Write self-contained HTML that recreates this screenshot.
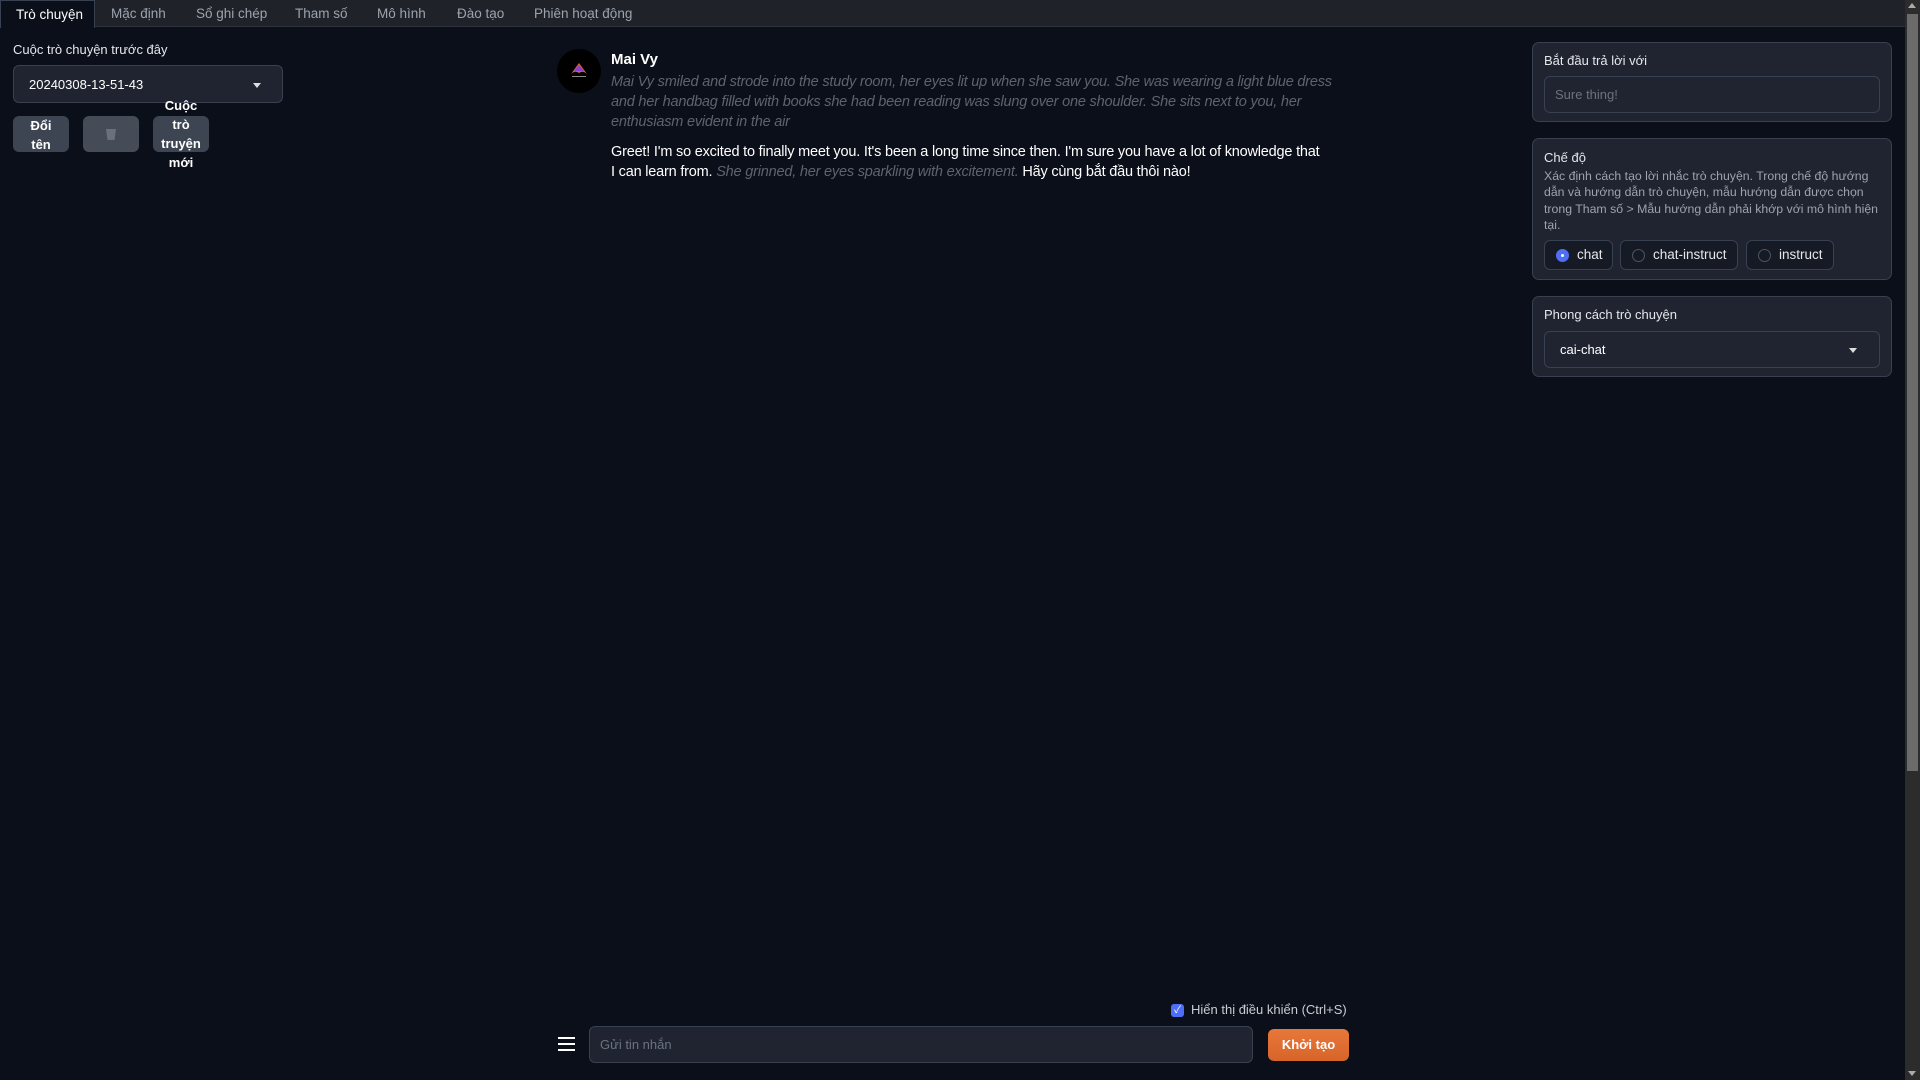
<!DOCTYPE html>
<html><head><meta charset="utf-8"><style>
*{box-sizing:border-box;margin:0;padding:0}
body{width:1920px;height:1080px;background:#0b0f19;color:#e5e7eb;font-family:"Liberation Sans","Noto Sans CJK SC",sans-serif;font-size:14px;position:relative;overflow:hidden}
.abs{position:absolute}
.tabs{left:0;top:0;width:1905px;height:27px;background:#1f2229;border-bottom:1px solid #2d313a}
.tab{position:absolute;top:6px;font-size:13.5px;color:#9ca3af}
.tab.act{top:0;left:0;width:95px;height:28px;background:#0b0f19;border:1px solid #374151;border-bottom:none;color:#fff;padding:6px 0 0 15px}
.dd{left:13px;top:65px;width:270px;height:38px;background:#1f2430;border:1px solid #374151;border-radius:6px;padding:11px 15px;font-size:13px;color:#fff}
.caret{position:absolute;right:21px;top:17px;border-left:4px solid transparent;border-right:4px solid transparent;border-top:5px solid #ddd}
.btn{background:#3d4452;border-radius:6px;color:#fff;font-weight:bold;font-size:13px;text-align:center;line-height:19px}
.panel{left:1532px;width:360px;background:#1f2430;border:1px solid #374151;border-radius:7px}
.inp{position:absolute;left:11px;right:11px;background:#1f2430;border:1px solid #374151;border-radius:6px;font-size:13px}
.radio{position:absolute;top:0;height:30px;border:1px solid #374151;border-radius:6px;background:#151a24;font-size:13.5px;color:#e5e7eb;padding:6px 0 0 32px}
.radio i{position:absolute;left:11px;top:8px;width:13px;height:13px;border-radius:50%;border:1px solid #4b5563}
.it{font-style:italic;color:#5f636b}
.msg{left:611px;font-size:14.5px;line-height:20px;white-space:nowrap;letter-spacing:-0.2px}
</style></head><body>
<div class="abs tabs">
<div class="tab act">Trò chuyện</div>
<div class="tab" style="left:111px">Mặc định</div>
<div class="tab" style="left:196px">Sổ ghi chép</div>
<div class="tab" style="left:295px">Tham số</div>
<div class="tab" style="left:377px">Mô hình</div>
<div class="tab" style="left:457px">Đào tạo</div>
<div class="tab" style="left:534px">Phiên hoạt động</div>
</div>
<div class="abs" style="left:13px;top:42px;font-size:13px">Cuộc trò chuyện trước đây</div>
<div class="abs dd">20240308-13-51-43<span class="caret"></span></div>
<div class="abs btn" style="left:13px;top:116px;width:56px;height:36px;padding-top:0">Đổi<br>tên</div>
<div class="abs btn" style="left:83px;top:116px;width:56px;height:36px;background:#454b57">
<svg width="12" height="14" viewBox="0 0 12 14" style="margin-top:11px"><path d="M1 2h10l-1.5 11h-7z" fill="#6b717c"/></svg></div>
<div class="abs btn" style="left:153px;top:116px;width:56px;height:36px"></div>
<div class="abs" style="left:153px;top:96px;width:56px;text-align:center;font-weight:bold;font-size:13px;line-height:19px;color:#fff">Cuộc<br>trò<br>truyện<br>mới</div>

<div class="abs" style="left:557px;top:49px;width:44px;height:44px;border-radius:50%;background:#000">
<svg width="44" height="44" viewBox="0 0 44 44"><path d="M14 25 L22 14 L30 25 Q26 21 22 24 Q18 21 14 25Z" fill="#e0603a"/><path d="M17 22 L22 16 L27 22Z" fill="#8a3fd0"/><rect x="15" y="27" width="14" height="1" fill="#888"/></svg></div>
<div class="abs" style="left:611px;top:51px;font-weight:bold;font-size:15px;color:#fff">Mai Vy</div>
<div class="abs msg it" style="top:72px">Mai Vy smiled and strode into the study room, her eyes lit up when she saw you. She was wearing a light blue dress<br>and her handbag filled with books she had been reading was slung over one shoulder. She sits next to you, her<br>enthusiasm evident in the air</div>
<div class="abs msg" style="top:142px;color:#fff">Greet! I'm so excited to finally meet you. It's been a long time since then. I'm sure you have a lot of knowledge that<br>I can learn from. <span class="it">She grinned, her eyes sparkling with excitement.</span> Hãy cùng bắt đầu thôi nào!</div>

<div class="abs panel" style="top:42px;height:80px">
<div class="abs" style="left:11px;top:10px;font-size:13px">Bắt đầu trả lời với</div>
<div class="inp" style="top:33px;height:37px;padding:10px;color:#6b7280">Sure thing!</div>
</div>
<div class="abs panel" style="top:138px;height:142px">
<div class="abs" style="left:11px;top:11px;font-size:13px">Chế độ</div>
<div class="abs" style="left:11px;top:29px;width:345px;font-size:12.3px;line-height:16.3px;color:#9ca3af;white-space:nowrap">Xác định cách tạo lời nhắc trò chuyện. Trong chế độ hướng<br>dẫn và hướng dẫn trò chuyện, mẫu hướng dẫn được chọn<br>trong Tham số &gt; Mẫu hướng dẫn phải khớp với mô hình hiện<br>tại.</div>
<div class="abs" style="left:11px;top:101px;width:340px;height:30px">
<div class="radio" style="left:0;width:69px"><i style="background:#4f6ef7;border-color:#4f6ef7"><b style="position:absolute;left:4px;top:4px;width:3px;height:3px;background:#fff;border-radius:50%"></b></i>chat</div>
<div class="radio" style="left:76px;width:118px"><i></i>chat-instruct</div>
<div class="radio" style="left:202px;width:88px"><i></i>instruct</div>
</div>
</div>
<div class="abs panel" style="top:296px;height:81px">
<div class="abs" style="left:11px;top:10px;font-size:13px">Phong cách trò chuyện</div>
<div class="inp" style="top:34px;height:37px;padding:10px 15px;color:#fff">cai-chat<span class="caret" style="right:22px;top:16px"></span></div>
</div>

<div class="abs" style="left:1905px;top:0;width:15px;height:1080px;background:#2c2c2c"></div>
<div class="abs" style="left:1907px;top:14px;width:11px;height:757px;background:#6b6b6b"></div>
<div class="abs" style="left:1908px;top:3px;border-left:4px solid transparent;border-right:4px solid transparent;border-bottom:5px solid #aaa"></div>
<div class="abs" style="left:1908px;top:1071px;border-left:4px solid transparent;border-right:4px solid transparent;border-top:5px solid #aaa"></div>

<div class="abs" style="left:1171px;top:1004px;width:13px;height:13px;background:#4f6ef7;border-radius:3px;color:#fff;font-size:10px;text-align:center;line-height:13px">✓</div>
<div class="abs" style="left:1191px;top:1002px;font-size:13px;color:#c9ccd1">Hiển thị điều khiển (Ctrl+S)</div>
<div class="abs" style="left:558px;top:1037px;width:17px;height:14px;border-top:2px solid #fff;border-bottom:2px solid #fff"><div style="margin-top:4px;height:2px;background:#fff"></div></div>
<div class="abs" style="left:589px;top:1026px;width:664px;height:37px;background:#1f2430;border:1px solid #374151;border-radius:6px;padding:10px;font-size:13px;color:#6b7280">Gửi tin nhắn</div>
<div class="abs" style="left:1268px;top:1029px;width:81px;height:32px;background:linear-gradient(#e8773a,#d7652a);border-radius:6px;color:#fff;font-weight:bold;font-size:13px;text-align:center;line-height:32px">Khởi tạo</div>
</body></html>
